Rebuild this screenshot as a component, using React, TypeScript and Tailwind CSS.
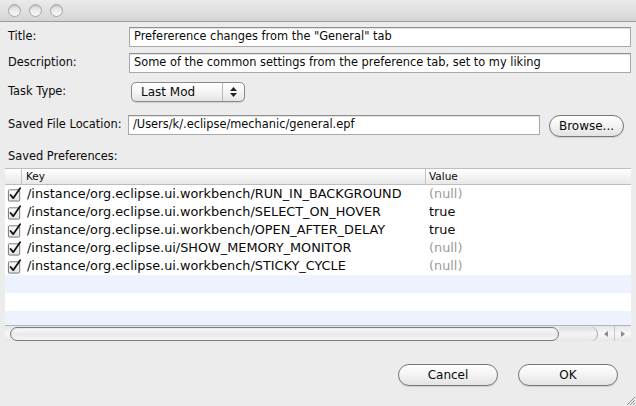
import React from 'react'

const rows = [
  ['/instance/org.eclipse.ui.workbench/RUN_IN_BACKGROUND', '(null)'],
  ['/instance/org.eclipse.ui.workbench/SELECT_ON_HOVER', 'true'],
  ['/instance/org.eclipse.ui.workbench/OPEN_AFTER_DELAY', 'true'],
  ['/instance/org.eclipse.ui/SHOW_MEMORY_MONITOR', '(null)'],
  ['/instance/org.eclipse.ui.workbench/STICKY_CYCLE', '(null)'],
]

const Light = () => (
  <div className="w-[13px] h-[13px] rounded-full border border-[#a9a9a9] bg-gradient-to-b from-[#d6d6d6] via-[#ececec] to-[#f7f7f7] shadow-[inset_0_1px_1px_rgba(0,0,0,0.15)]" />
)

const Check = () => (
  <svg width="16" height="15" viewBox="0 0 16 15">
    <defs>
      <linearGradient id="cb" x1="0" y1="0" x2="0" y2="1">
        <stop offset="0" stopColor="#ffffff" />
        <stop offset="1" stopColor="#e2e2e2" />
      </linearGradient>
    </defs>
    <rect x="1.5" y="2.5" width="12" height="12" rx="1" fill="url(#cb)" stroke="#707070" />
    <path d="M3.8 8 L6.6 11.4 L14 0.8" fill="none" stroke="#111" strokeWidth="1.9" strokeLinecap="round" strokeLinejoin="round" />
  </svg>
)

const Field = ({ value, className }: { value: string; className: string }) => (
  <div className={`h-[20px] bg-white border border-[#a8a8a8] border-t-[#8e8e8e] shadow-[inset_0_1px_1px_rgba(0,0,0,0.12)] flex items-center pl-[4px] whitespace-nowrap overflow-hidden ${className}`}>
    {value}
  </div>
)

const PillButton = ({ label, className }: { label: string; className: string }) => (
  <div className={`h-[22px] rounded-full border border-[#777] bg-gradient-to-b from-[#ffffff] via-[#f3f3f3] to-[#e3e3e3] shadow-[0_1px_1px_rgba(0,0,0,0.12)] flex items-center justify-center text-[12px] ${className}`}>
    {label}
  </div>
)

export default function App() {
  return (
    <div className="w-[636px] h-[406px] bg-[#ececec] flex flex-col text-[11.4px] text-[#0a0a0a] font-['Lucida_Grande','DejaVu_Sans',sans-serif] relative overflow-hidden">
      {/* title bar */}
      <div className="h-[22px] border-b border-[#9c9c9c] bg-gradient-to-b from-[#ebebeb] to-[#d5d5d5] flex items-center pl-[8px] gap-[8px]">
        <Light />
        <Light />
        <Light />
      </div>

      <div className="mt-[5px] flex items-center">
        <div className="w-[129px] pl-[8px]">Title:</div>
        <Field value={'Prefererence changes from the "General" tab'} className="w-[502px]" />
      </div>

      <div className="mt-[6px] flex items-center">
        <div className="w-[129px] pl-[8px]">Description:</div>
        <Field value="Some of the common settings from the preference tab, set to my liking" className="w-[502px]" />
      </div>

      <div className="mt-[9px] flex items-center">
        <div className="w-[131px] pl-[8px]">Task Type:</div>
        <div className="w-[114px] h-[20px] rounded-[5px] border border-[#8a8a8a] bg-gradient-to-b from-[#ffffff] via-[#f5f5f5] to-[#e4e4e4] shadow-[0_1px_1px_rgba(0,0,0,0.12)] flex items-center text-[12px]">
          <div className="flex-1 pl-[9px]">Last Mod</div>
          <div className="w-[22px] h-full border-l border-[#b8b8b8] flex flex-col items-center justify-center gap-[2px]">
            <svg width="7" height="4" viewBox="0 0 7 4"><path d="M3.5 0 L7 4 L0 4 Z" fill="#222" /></svg>
            <svg width="7" height="4" viewBox="0 0 7 4"><path d="M0 0 L7 0 L3.5 4 Z" fill="#222" /></svg>
          </div>
        </div>
      </div>

      <div className="mt-[13px] flex items-start">
        <div className="w-[128px] pl-[8px] h-[20px] flex items-center">Saved File Location:</div>
        <Field value="/Users/k/.eclipse/mechanic/general.epf" className="w-[412px]" />
        <PillButton label="Browse..." className="ml-[9px] w-[75px]" />
      </div>

      <div className="mt-[13px] h-[13px] pl-[8px] flex items-center">Saved Preferences:</div>

      {/* table */}
      <div className="mt-[5px] ml-[5px] w-[626px] h-[173px] flex flex-col bg-white">
        <div className="h-[17px] shrink-0 border-t border-b border-[#bdbdbd] bg-gradient-to-b from-[#ffffff] to-[#e8e8e8] flex text-[10.5px]">
          <div className="w-[17px] border-r border-[#c4c4c4]" />
          <div className="w-[404px] border-r border-[#c4c4c4] pl-[4px] flex items-center">Key</div>
          <div className="flex-1 pl-[3px] flex items-center">Value</div>
        </div>
        {rows.map(([k, v]) => (
          <div key={k} className="h-[18px] shrink-0 flex items-center bg-white text-[12.85px]">
            <div className="w-[17px] flex justify-center pl-[2px]">
              <Check />
            </div>
            <div className="w-[404px] pl-[5px] whitespace-nowrap">{k}</div>
            <div className={`flex-1 pl-[3px] ${v === '(null)' ? 'text-[#9a9a9a]' : ''}`}>{v}</div>
          </div>
        ))}
        <div className="h-[18px] shrink-0 bg-[#edf3fe]" />
        <div className="h-[18px] shrink-0 bg-white" />
        <div className="h-[14px] shrink-0 bg-[#edf3fe]" />
        {/* horizontal scrollbar */}
        <div className="h-[16px] shrink-0 flex items-center bg-gradient-to-b from-[#e6e6e6] via-[#f8f8f8] to-[#e6e6e6] border-t border-[#b5b5b5]">
          <div className="w-[5px] h-full" />
          <div className="w-[549px] h-[14px] rounded-full border border-[#7a7a7a] bg-gradient-to-b from-[#fdfdfd] via-[#e9e9e9] to-[#f6f6f6] shadow-[inset_0_1px_1px_rgba(0,0,0,0.08)]" />
          <div className="w-[39px] h-[14px] rounded-r-full border-r border-[#a5a5a5] bg-gradient-to-b from-[#e0e0e0] via-[#f4f4f4] to-[#e6e6e6]" />
          <div className="flex-1 h-full flex">
            <div className="flex-1 flex items-center justify-center border-r border-[#c8c8c8]">
              <svg width="4" height="6" viewBox="0 0 4 6"><path d="M0 3 L4 0 L4 6 Z" fill="#8a8a8a" /></svg>
            </div>
            <div className="flex-1 flex items-center justify-center">
              <svg width="4" height="6" viewBox="0 0 4 6"><path d="M4 3 L0 0 L0 6 Z" fill="#8a8a8a" /></svg>
            </div>
          </div>
        </div>
      </div>

      <div className="mt-[23px] flex justify-end pr-[18px] gap-[20px]">
        <PillButton label="Cancel" className="w-[100px]" />
        <PillButton label="OK" className="w-[100px]" />
      </div>

      {/* resize grip */}
      <svg className="absolute right-0 bottom-0" width="12" height="12" viewBox="0 0 12 12">
        <path d="M11 3 L3 11 M11 6 L6 11 M11 9 L9 11" stroke="#8f8f8f" strokeWidth="1" />
      </svg>
    </div>
  )
}
